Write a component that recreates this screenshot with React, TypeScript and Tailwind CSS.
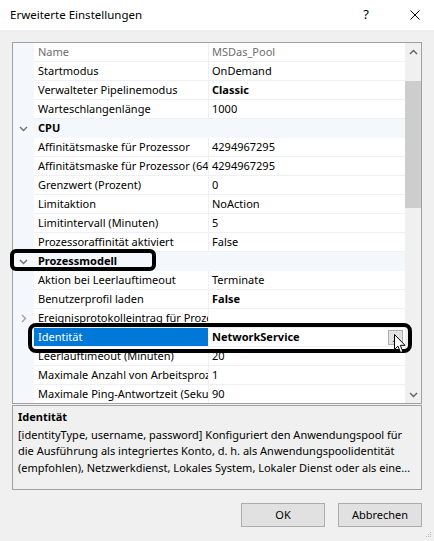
import React from "react";

type Row =
  | { cat: string }
  | {
      name: string;
      value: string;
      bold?: boolean;
      muted?: boolean;
      expandable?: boolean;
      selected?: boolean;
    };

const rows: Row[] = [
  { name: "Name", value: "MSDas_Pool", muted: true },
  { name: "Startmodus", value: "OnDemand" },
  { name: "Verwalteter Pipelinemodus", value: "Classic", bold: true },
  { name: "Warteschlangenlänge", value: "1000" },
  { cat: "CPU" },
  { name: "Affinitätsmaske für Prozessor", value: "4294967295" },
  { name: "Affinitätsmaske für Prozessor (64-Bit-Option)", value: "4294967295" },
  { name: "Grenzwert (Prozent)", value: "0" },
  { name: "Limitaktion", value: "NoAction" },
  { name: "Limitintervall (Minuten)", value: "5" },
  { name: "Prozessoraffinität aktiviert", value: "False" },
  { cat: "Prozessmodell" },
  { name: "Aktion bei Leerlauftimeout", value: "Terminate" },
  { name: "Benutzerprofil laden", value: "False", bold: true },
  { name: "Ereignisprotokolleintrag für Prozessmodell", value: "", expandable: true },
  { name: "Identität", value: "NetworkService", bold: true, selected: true },
  { name: "Leerlauftimeout (Minuten)", value: "20" },
  { name: "Maximale Anzahl von Arbeitsprozessen", value: "1" },
  { name: "Maximale Ping-Antwortzeit (Sekunden)", value: "90" },
];

function ChevronDown({ color = "#6f6f6f" }: { color?: string }) {
  return (
    <svg width="9" height="6" viewBox="0 0 9 6">
      <polyline points="1,1 4.5,4.5 8,1" fill="none" stroke={color} strokeWidth="1.4" />
    </svg>
  );
}

function ChevronRight() {
  return (
    <svg width="6" height="9" viewBox="0 0 6 9">
      <polyline points="1,1 4.5,4.5 1,8" fill="none" stroke="#a0a0a0" strokeWidth="1.4" />
    </svg>
  );
}

function ChevronUp() {
  return (
    <svg width="9" height="6" viewBox="0 0 9 6">
      <polyline points="1,5 4.5,1.5 8,5" fill="none" stroke="#606060" strokeWidth="1.4" />
    </svg>
  );
}

function GridRow({ row }: { row: Row }) {
  if ("cat" in row) {
    return (
      <div className="flex h-[19px] bg-[#f4f7fc] items-center">
        <div className="w-[21px] flex justify-center">
          <ChevronDown />
        </div>
        <span className="pl-[4px] font-bold">{row.cat}</span>
      </div>
    );
  }
  return (
    <div className="flex h-[19px]">
      <div className="w-[21px] shrink-0 bg-[#f4f7fc] flex items-center justify-center">
        {row.expandable && <ChevronRight />}
      </div>
      <div
        className={`w-[174px] shrink-0 pl-[4px] flex items-center overflow-hidden whitespace-nowrap border-b border-[#edf1f7] ${
          row.selected ? "bg-[#0078d7] text-white" : row.muted ? "text-[#6d6d6d]" : "text-black"
        }`}
      >
        {row.name}
      </div>
      <div className="w-px shrink-0 bg-[#edf1f7]" />
      <div
        className={`flex-1 pl-[3px] flex items-center whitespace-nowrap overflow-hidden border-b border-[#edf1f7] ${
          row.muted ? "text-[#6d6d6d]" : "text-black"
        } ${row.bold ? "font-bold" : ""}`}
      >
        {row.value}
        {row.selected && (
          <div className="ml-auto mr-[2px] w-[15px] h-[15px] bg-[#e1e1e1] border border-[#adadad] flex items-end justify-center text-[8px] leading-[10px] font-normal">
            ...
          </div>
        )}
      </div>
    </div>
  );
}

export default function App() {
  return (
    <div className="relative w-[434px] h-[541px] bg-[#f0f0f0] text-[11px] text-black font-['Noto_Sans',sans-serif] overflow-hidden select-none">
      {/* title bar */}
      <div className="h-[30px] bg-white flex items-center pl-[10px] pr-[14px]">
        <span className="text-[11.5px]">Erweiterte Einstellungen</span>
        <span className="ml-auto w-[20px] text-center text-[13px]">?</span>
        <svg className="ml-[34px]" width="10" height="10" viewBox="0 0 10 10">
          <path d="M0.5 0.5L9.5 9.5M9.5 0.5L0.5 9.5" stroke="#000" strokeWidth="1" />
        </svg>
      </div>

      <div className="px-3 pt-3">
        {/* property grid */}
        <div className="h-[362px] border border-[#a0a0a0] bg-white flex overflow-hidden">
          <div className="flex-1 overflow-hidden">
            {rows.map((r, i) => (
              <GridRow key={i} row={r} />
            ))}
          </div>
          <div className="w-[16px] bg-[#f0f0f0] flex flex-col">
            <div className="h-[17px] flex items-center justify-center">
              <ChevronUp />
            </div>
            <div className="h-[21px]" />
            <div className="h-[127px] bg-[#cdcdcd]" />
            <div className="flex-1" />
            <div className="h-[17px] flex items-center justify-center">
              <ChevronDown color="#606060" />
            </div>
          </div>
        </div>

        {/* description */}
        <div className="mt-px h-[85px] border border-[#a0a0a0] bg-[#f0f0f0] pl-[5px] pr-[4px] pt-[3px] leading-[16.5px]">
          <div className="font-bold mb-[1px]">Identität</div>
          <div>
            [identityType, username, password] Konfiguriert den Anwendungspool für die Ausführung
            als integriertes Konto, d. h. als Anwendungspoolidentität (empfohlen), Netzwerkdienst,
            Lokales System, Lokaler Dienst oder als eine...
          </div>
        </div>

        {/* buttons */}
        <div className="mt-[13px] flex justify-end gap-[13px]">
          <button className="w-[84px] h-[24px] bg-[#e1e1e1] border border-[#adadad] text-[11px]">
            OK
          </button>
          <button className="w-[84px] h-[24px] bg-[#e1e1e1] border border-[#adadad] text-[11px]">
            Abbrechen
          </button>
        </div>
      </div>

      {/* highlight frames */}
      <div className="absolute left-[10px] top-[249px] w-[146px] h-[22px] border-[4px] border-black rounded-[6px]" />
      <div className="absolute left-[28px] top-[323px] w-[384px] h-[30px] border-[4px] border-black rounded-[8px]" />

      {/* mouse pointer */}
      <svg className="absolute left-[394px] top-[334px]" width="12" height="20" viewBox="0 0 12 20">
        <path
          d="M0.5 0.5L0.5 15.5L4 12.2L6.5 18.5L8.8 17.5L6.3 11.3L11 11.3Z"
          fill="#fff"
          stroke="#000"
          strokeWidth="1"
          strokeLinejoin="round"
        />
      </svg>

      {/* size grip */}
      <svg className="absolute right-[2px] bottom-[3px]" width="7" height="7" viewBox="0 0 7 7">
        <rect x="5" y="1" width="1" height="1" fill="#b8b8b8" />
        <rect x="3" y="3" width="1" height="1" fill="#b8b8b8" />
        <rect x="5" y="3" width="1" height="1" fill="#b8b8b8" />
        <rect x="1" y="5" width="1" height="1" fill="#b8b8b8" />
        <rect x="3" y="5" width="1" height="1" fill="#b8b8b8" />
        <rect x="5" y="5" width="1" height="1" fill="#b8b8b8" />
      </svg>
    </div>
  );
}
